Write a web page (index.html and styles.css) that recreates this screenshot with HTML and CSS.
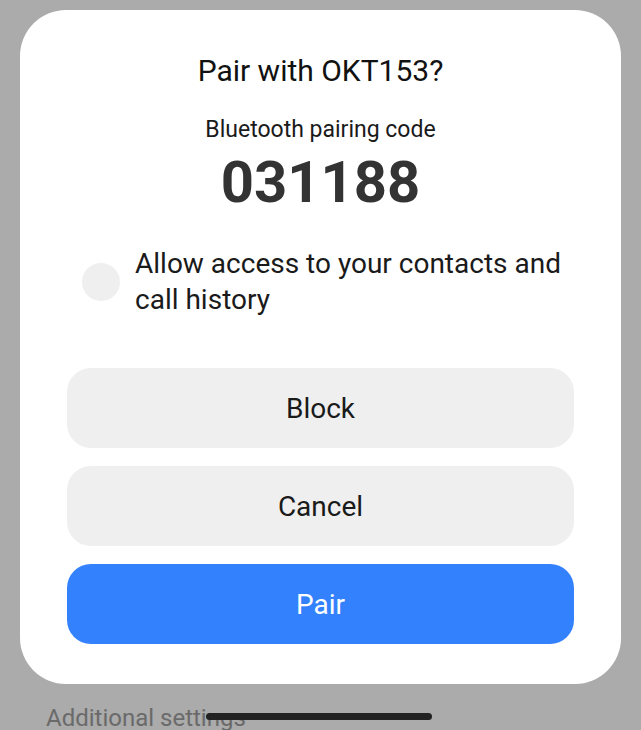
FILE: index.html
```html
<!DOCTYPE html>
<html lang="en">
<head>
    <meta charset="UTF-8">
    <meta name="viewport" content="width=device-width, initial-scale=1.0">
    <title>Pair with OKT153?</title>
    <link rel="stylesheet" href="styles.css">
</head>
<body>
    <div class="dialog">
        <h1 class="title">Pair with OKT153?</h1>
        <div class="code-label">Bluetooth pairing code</div>
        <div class="code">031188</div>
        <label class="access">
            <span class="check"></span>
            <span class="access-text">Allow access to your contacts and call history</span>
        </label>
        <div class="actions">
            <button class="btn">Block</button>
            <button class="btn">Cancel</button>
            <button class="btn primary">Pair</button>
        </div>
    </div>
    <div class="below">Additional settings</div>
    <div class="home-bar"></div>
</body>
</html>
```

FILE: styles.css
```css
body {
    margin: 0;
    height: 730px;
    overflow: hidden;
    background-color: #ababab;
    font-family: Roboto, "Noto Sans", sans-serif;
    position: relative;
}
.dialog {
    box-sizing: border-box;
    margin: 10px 20px 0;
    height: 674px;
    padding: 41px 47px 0;
    background: #fff;
    border-radius: 46px;
    text-align: center;
}
.title {
    margin: 0;
    font-size: 30px;
    font-weight: 400;
    line-height: 40px;
    color: #111;
}
.code-label {
    margin-top: 25px;
    font-size: 23px;
    line-height: 28px;
    color: #1a1a1a;
}
.code {
    margin-top: 2px;
    font-size: 58px;
    font-weight: 700;
    line-height: 72px;
    color: #333;
}
.access {
    display: flex;
    align-items: center;
    gap: 15px;
    margin-top: 28px;
    padding-left: 15px;
    text-align: left;
}
.check {
    flex: none;
    width: 38px;
    height: 38px;
    border-radius: 50%;
    background: #efefef;
}
.access-text {
    font-size: 28px;
    line-height: 36px;
    color: #1a1a1a;
}
.actions {
    display: flex;
    flex-direction: column;
    gap: 18px;
    margin-top: 50px;
}
.btn {
    height: 80px;
    border: none;
    border-radius: 24px;
    background: #efefef;
    font-family: inherit;
    font-size: 28px;
    color: #1a1a1a;
}
.btn.primary {
    background: #3381fd;
    color: #fff;
}
.below {
    margin: 20px 0 0 46px;
    font-size: 24px;
    color: #6a6a6a;
}
.home-bar {
    position: absolute;
    left: 206px;
    top: 713px;
    width: 226px;
    height: 7px;
    border-radius: 4px;
    background: #222;
}
```
